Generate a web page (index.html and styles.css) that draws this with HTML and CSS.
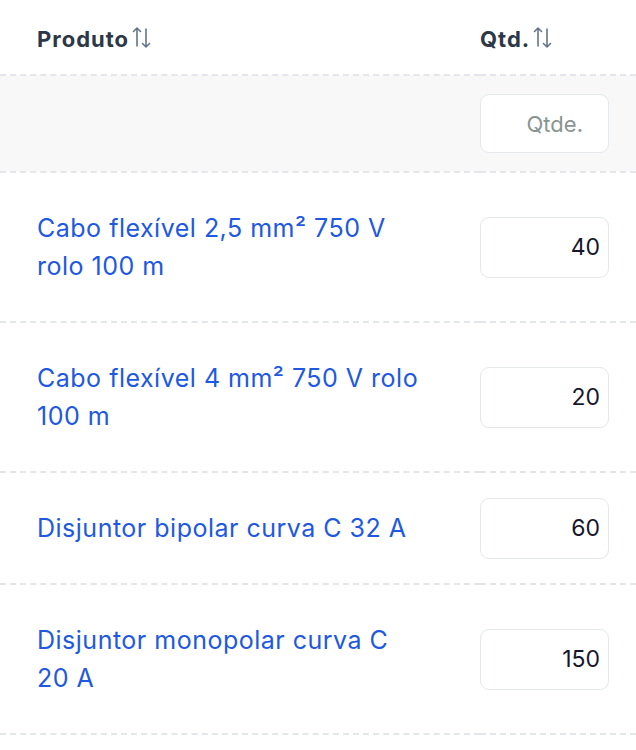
FILE: index.html
```html
<!DOCTYPE html>
<html lang="pt-BR">
<head>
    <meta charset="UTF-8">
    <meta name="viewport" content="width=device-width, initial-scale=1.0">
    <title>Produtos</title>
    <link rel="stylesheet" href="styles.css">
</head>
<body>
    <table class="product-table">
        <thead>
            <tr class="head-row">
                <th class="col-name">
                    <span class="head-label">Produto</span>
                    <svg class="sort-icon" width="20" height="22" viewBox="0 0 20 22" fill="none" stroke="#64748b" stroke-width="1.6" stroke-linecap="round" stroke-linejoin="round">
                        <path d="M5 20V2M1.5 5.5L5 2l3.5 3.5"/>
                        <path d="M14 3v18M10.5 17.5L14 21l3.5-3.5"/>
                    </svg>
                </th>
                <th class="col-qty">
                    <span class="head-label">Qtd.</span>
                    <svg class="sort-icon" width="20" height="22" viewBox="0 0 20 22" fill="none" stroke="#64748b" stroke-width="1.6" stroke-linecap="round" stroke-linejoin="round">
                        <path d="M5 20V2M1.5 5.5L5 2l3.5 3.5"/>
                        <path d="M14 3v18M10.5 17.5L14 21l3.5-3.5"/>
                    </svg>
                </th>
            </tr>
            <tr class="filter-row">
                <th class="col-name"></th>
                <th class="col-qty"><input type="text" class="qty-input filter-input" placeholder="Qtde."></th>
            </tr>
        </thead>
        <tbody>
            <tr>
                <td class="col-name"><a href="#" class="product-link">Cabo flexível 2,5 mm² 750 V rolo 100 m</a></td>
                <td class="col-qty"><input type="text" class="qty-input" value="40"></td>
            </tr>
            <tr>
                <td class="col-name"><a href="#" class="product-link">Cabo flexível 4 mm² 750 V rolo 100 m</a></td>
                <td class="col-qty"><input type="text" class="qty-input" value="20"></td>
            </tr>
            <tr>
                <td class="col-name"><a href="#" class="product-link">Disjuntor bipolar curva C 32 A</a></td>
                <td class="col-qty"><input type="text" class="qty-input" value="60"></td>
            </tr>
            <tr>
                <td class="col-name"><a href="#" class="product-link">Disjuntor monopolar curva C 20 A</a></td>
                <td class="col-qty"><input type="text" class="qty-input" value="150"></td>
            </tr>
        </tbody>
    </table>
</body>
</html>
```

FILE: styles.css
```css
/* Base */
body {
    margin: 0;
    background: #ffffff;
    font-family: 'Inter', sans-serif;
    color: #1f2937;
}

/* Table */
.product-table {
    width: 100%;
    border-collapse: collapse;
}

.product-table th,
.product-table td {
    padding: 0;
    text-align: left;
    vertical-align: middle;
}

.col-name {
    padding-left: 37px !important;
    padding-right: 57px !important;
}

.col-qty {
    width: 129px;
    padding-right: 27px !important;
}

/* Header */
.head-row th {
    height: 70px;
    padding-top: 4px !important;
    font-weight: 700;
}

.head-label {
    font-size: 22px;
    color: #2d3748;
    letter-spacing: 1px;
    vertical-align: middle;
}

.sort-icon {
    vertical-align: middle;
    margin-left: -1px;
    position: relative;
    top: -2px;
}

/* Filter row */
.filter-row th {
    height: 95px;
    background: #f8f8f9;
    border-top: 2px dashed #e4e6ea;
    border-bottom: 2px dashed #e4e6ea;
}

/* Body rows */
.product-table tbody td {
    border-bottom: 2px dashed #e4e6ea;
}

.product-table tbody td.col-name {
    padding-top: 36px;
    padding-bottom: 36px;
}

.product-link {
    color: #2158e0;
    text-decoration: none;
    font-size: 25px;
    line-height: 38px;
    letter-spacing: 0.5px;
}

/* Inputs */
.qty-input {
    display: block;
    box-sizing: border-box;
    width: 129px;
    height: 61px;
    border: 1.5px solid #e5e7eb;
    border-radius: 9px;
    background: #ffffff;
    padding: 0 8px;
    text-align: right;
    font-family: 'Inter', sans-serif;
    font-size: 23px;
    color: #16172b;
    outline: none;
}

.filter-input {
    height: 59px;
    padding-right: 25px;
    font-size: 22px;
}

.qty-input::placeholder {
    color: #8a9591;
}
```
